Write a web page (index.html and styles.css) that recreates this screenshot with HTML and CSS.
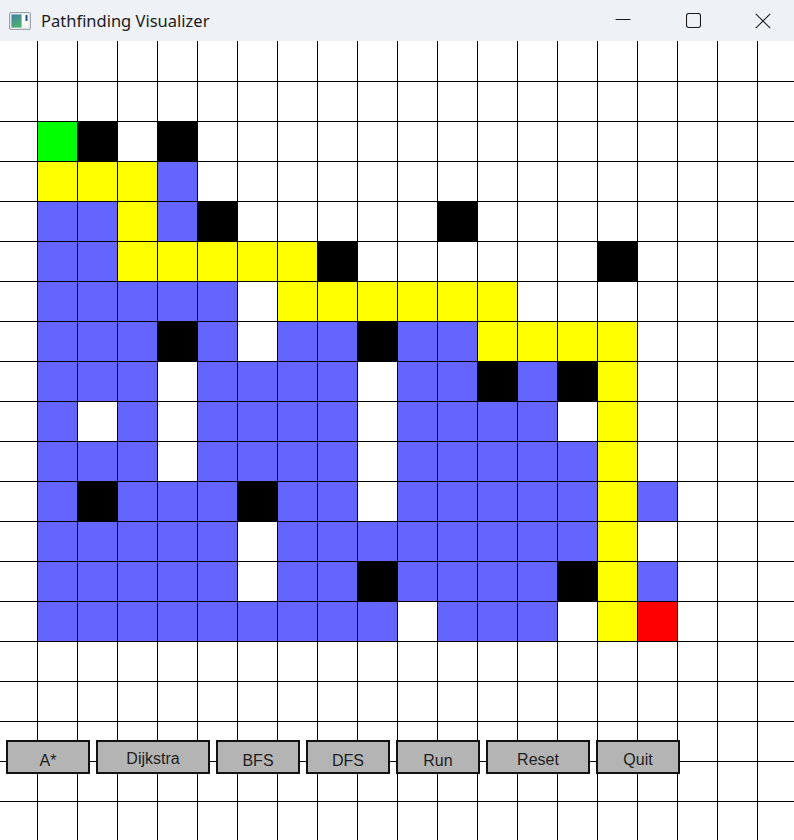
FILE: index.html
```html
<!DOCTYPE html>
<html lang="en">
<head>
<meta charset="utf-8">
<title>Pathfinding Visualizer</title>
<link rel="stylesheet" href="styles.css">
</head>
<body>
<div class="window">
  <header class="titlebar">
    <svg class="app-icon" width="22" height="18" viewBox="0 0 22 18">
      <defs>
        <linearGradient id="ig" x1="0" y1="0" x2="0.4" y2="1">
          <stop offset="0" stop-color="#3f7fa8"/>
          <stop offset="1" stop-color="#4fae6c"/>
        </linearGradient>
      </defs>
      <rect x="0.5" y="0.5" width="21" height="17" rx="1.5" fill="#e4e7ea" stroke="#9aa3ab"/>
      <rect x="2.5" y="2.5" width="10" height="13" fill="url(#ig)"/>
      <rect x="13" y="2.5" width="6.5" height="13" fill="#fbfbfb"/>
      <rect x="16.5" y="3" width="2" height="6" fill="#2a4e86"/>
    </svg>
    <span class="title">Pathfinding Visualizer</span>
    <div class="caption">
      <span class="cap-btn">
        <svg width="16" height="15" viewBox="0 0 16 15"><line x1="0.5" y1="6.5" x2="15.5" y2="6.5" stroke="#1b1b1b" stroke-width="1"/></svg>
      </span>
      <span class="cap-btn">
        <svg width="15" height="15" viewBox="0 0 15 15"><rect x="0.5" y="0.5" width="14" height="14" rx="2.2" fill="none" stroke="#1b1b1b" stroke-width="1.1"/></svg>
      </span>
      <span class="cap-btn">
        <svg width="16" height="16" viewBox="0 0 16 16"><path d="M0.8 0.8 L15.2 15.2 M15.2 0.8 L0.8 15.2" stroke="#1b1b1b" stroke-width="1.1" fill="none"/></svg>
      </span>
    </div>
  </header>

  <main class="board">
    <div class="row"><i></i><i></i><i></i><i></i><i></i><i></i><i></i><i></i><i></i><i></i><i></i><i></i><i></i><i></i><i></i><i></i><i></i><i></i><i></i><i></i></div>
    <div class="row"><i></i><i></i><i></i><i></i><i></i><i></i><i></i><i></i><i></i><i></i><i></i><i></i><i></i><i></i><i></i><i></i><i></i><i></i><i></i><i></i></div>
    <div class="row"><i></i><i class="s"></i><i class="x"></i><i></i><i class="x"></i><i></i><i></i><i></i><i></i><i></i><i></i><i></i><i></i><i></i><i></i><i></i><i></i><i></i><i></i><i></i></div>
    <div class="row"><i></i><i class="p"></i><i class="p"></i><i class="p"></i><i class="v"></i><i></i><i></i><i></i><i></i><i></i><i></i><i></i><i></i><i></i><i></i><i></i><i></i><i></i><i></i><i></i></div>
    <div class="row"><i></i><i class="v"></i><i class="v"></i><i class="p"></i><i class="v"></i><i class="x"></i><i></i><i></i><i></i><i></i><i></i><i class="x"></i><i></i><i></i><i></i><i></i><i></i><i></i><i></i><i></i></div>
    <div class="row"><i></i><i class="v"></i><i class="v"></i><i class="p"></i><i class="p"></i><i class="p"></i><i class="p"></i><i class="p"></i><i class="x"></i><i></i><i></i><i></i><i></i><i></i><i></i><i class="x"></i><i></i><i></i><i></i><i></i></div>
    <div class="row"><i></i><i class="v"></i><i class="v"></i><i class="v"></i><i class="v"></i><i class="v"></i><i></i><i class="p"></i><i class="p"></i><i class="p"></i><i class="p"></i><i class="p"></i><i class="p"></i><i></i><i></i><i></i><i></i><i></i><i></i><i></i></div>
    <div class="row"><i></i><i class="v"></i><i class="v"></i><i class="v"></i><i class="x"></i><i class="v"></i><i></i><i class="v"></i><i class="v"></i><i class="x"></i><i class="v"></i><i class="v"></i><i class="p"></i><i class="p"></i><i class="p"></i><i class="p"></i><i></i><i></i><i></i><i></i></div>
    <div class="row"><i></i><i class="v"></i><i class="v"></i><i class="v"></i><i></i><i class="v"></i><i class="v"></i><i class="v"></i><i class="v"></i><i></i><i class="v"></i><i class="v"></i><i class="x"></i><i class="v"></i><i class="x"></i><i class="p"></i><i></i><i></i><i></i><i></i></div>
    <div class="row"><i></i><i class="v"></i><i></i><i class="v"></i><i></i><i class="v"></i><i class="v"></i><i class="v"></i><i class="v"></i><i></i><i class="v"></i><i class="v"></i><i class="v"></i><i class="v"></i><i></i><i class="p"></i><i></i><i></i><i></i><i></i></div>
    <div class="row"><i></i><i class="v"></i><i class="v"></i><i class="v"></i><i></i><i class="v"></i><i class="v"></i><i class="v"></i><i class="v"></i><i></i><i class="v"></i><i class="v"></i><i class="v"></i><i class="v"></i><i class="v"></i><i class="p"></i><i></i><i></i><i></i><i></i></div>
    <div class="row"><i></i><i class="v"></i><i class="x"></i><i class="v"></i><i class="v"></i><i class="v"></i><i class="x"></i><i class="v"></i><i class="v"></i><i></i><i class="v"></i><i class="v"></i><i class="v"></i><i class="v"></i><i class="v"></i><i class="p"></i><i class="v"></i><i></i><i></i><i></i></div>
    <div class="row"><i></i><i class="v"></i><i class="v"></i><i class="v"></i><i class="v"></i><i class="v"></i><i></i><i class="v"></i><i class="v"></i><i class="v"></i><i class="v"></i><i class="v"></i><i class="v"></i><i class="v"></i><i class="v"></i><i class="p"></i><i></i><i></i><i></i><i></i></div>
    <div class="row"><i></i><i class="v"></i><i class="v"></i><i class="v"></i><i class="v"></i><i class="v"></i><i></i><i class="v"></i><i class="v"></i><i class="x"></i><i class="v"></i><i class="v"></i><i class="v"></i><i class="v"></i><i class="x"></i><i class="p"></i><i class="v"></i><i></i><i></i><i></i></div>
    <div class="row"><i></i><i class="v"></i><i class="v"></i><i class="v"></i><i class="v"></i><i class="v"></i><i class="v"></i><i class="v"></i><i class="v"></i><i class="v"></i><i></i><i class="v"></i><i class="v"></i><i class="v"></i><i></i><i class="p"></i><i class="e"></i><i></i><i></i><i></i></div>
    <div class="row"><i></i><i></i><i></i><i></i><i></i><i></i><i></i><i></i><i></i><i></i><i></i><i></i><i></i><i></i><i></i><i></i><i></i><i></i><i></i><i></i></div>
    <div class="row"><i></i><i></i><i></i><i></i><i></i><i></i><i></i><i></i><i></i><i></i><i></i><i></i><i></i><i></i><i></i><i></i><i></i><i></i><i></i><i></i></div>
    <div class="row"><i></i><i></i><i></i><i></i><i></i><i></i><i></i><i></i><i></i><i></i><i></i><i></i><i></i><i></i><i></i><i></i><i></i><i></i><i></i><i></i></div>
    <div class="row"><i></i><i></i><i></i><i></i><i></i><i></i><i></i><i></i><i></i><i></i><i></i><i></i><i></i><i></i><i></i><i></i><i></i><i></i><i></i><i></i></div>
    <div class="row"><i></i><i></i><i></i><i></i><i></i><i></i><i></i><i></i><i></i><i></i><i></i><i></i><i></i><i></i><i></i><i></i><i></i><i></i><i></i><i></i></div>
  </main>

  <nav class="toolbar">
    <span class="btn">A*</span>
    <span class="btn btn-wide btn-up">Dijkstra</span>
    <span class="btn">BFS</span>
    <span class="btn">DFS</span>
    <span class="btn">Run</span>
    <span class="btn btn-mid btn-half">Reset</span>
    <span class="btn btn-half">Quit</span>
  </nav>
</div>
</body>
</html>
```

FILE: styles.css
```css
html, body {
  margin: 0;
  padding: 0;
  background: #ffffff;
  overflow: hidden;
}

.window {
  position: relative;
  width: 794px;
  height: 840px;
  overflow: hidden;
  background: #ffffff;
}

.titlebar {
  height: 41px;
  background: #eef2f7;
  display: flex;
  align-items: center;
}

.app-icon {
  margin-left: 9px;
  flex: none;
}

.title {
  margin-left: 10px;
  font-family: "Noto Sans", "Open Sans", sans-serif;
  font-size: 16.5px;
  color: #1b1b1b;
  padding-bottom: 1px;
}

.caption {
  margin-left: auto;
  margin-right: -4px;
  display: flex;
  height: 41px;
}

.cap-btn {
  width: 70px;
  height: 41px;
  display: flex;
  align-items: center;
  justify-content: center;
}

.board {
  margin-left: -3px;
  width: 800px;
  display: flex;
  flex-direction: column;
}

.row {
  display: flex;
  height: 40px;
}

.row i {
  display: block;
  flex: none;
  width: 40px;
  height: 40px;
  box-sizing: border-box;
  border-left: 1px solid #000;
  border-top: 1px solid #000;
  background: #ffffff;
}

.row:first-child i {
  border-top: none;
}

.row i.v { background: #6464ff; }
.row i.p { background: #ffff00; }
.row i.x { background: #000000; }
.row i.s { background: #00ff00; }
.row i.e { background: #ff0000; }

.toolbar {
  position: absolute;
  left: 6px;
  top: 740px;
  display: flex;
  gap: 6px;
}

.btn {
  box-sizing: border-box;
  width: 84px;
  height: 34px;
  background: #b4b4b4;
  border: 2px solid #111;
  font-family: "Liberation Sans", Arial, sans-serif;
  font-size: 16px;
  line-height: 18px;
  color: #1e1e1e;
  text-align: center;
  padding-top: 10px;
}

.btn-wide { width: 114px; }
.btn-mid { width: 104px; }
.btn-up { padding-top: 7.5px; }
.btn-half { padding-top: 8.5px; }
```
